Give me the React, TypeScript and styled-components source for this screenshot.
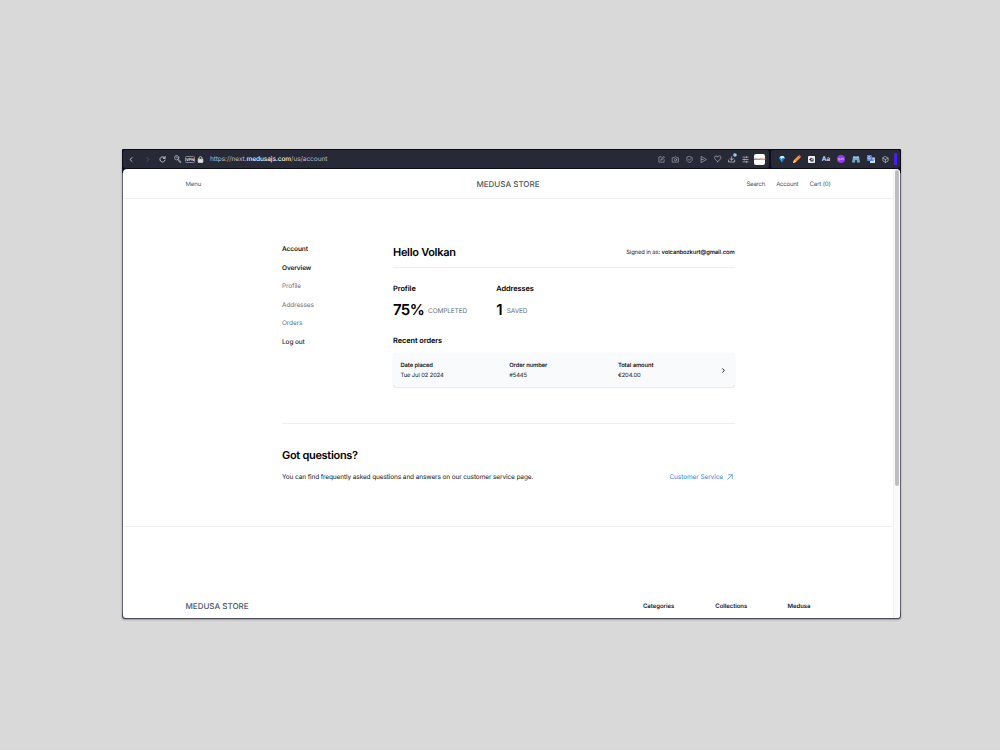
import React from 'react';
import styled, { createGlobalStyle } from 'styled-components';

const Global = createGlobalStyle`
  * { box-sizing: border-box; }
  body { margin: 0; background: #d9d9d9; font-family: Inter, "Liberation Sans", sans-serif; text-rendering: geometricPrecision; }
`;

const Stage = styled.main`
  width: 1000px;
  height: 750px;
  padding: 149px 0 0 122px;
  overflow: hidden;
  background: #d9d9d9;
`;

const Browser = styled.div`
  width: 779px;
  height: 470px;
  padding: 1px 1px 1.5px;
  display: flex;
  flex-direction: column;
  background: linear-gradient(#0c0c1c 0 24px, #62636e 24px 460px, #4a4b57 466px);
  border-radius: 1px 1px 3px 3px;
  box-shadow: 0 1px 2px rgba(0, 0, 0, 0.3);
`;

const Toolbar = styled.div`
  height: 19px;
  flex: none;
  padding-bottom: 1px;
  display: flex;
  gap: 2px;
  background: #0c0c1c;
`;

const BarSegment = styled.div<{ $width: number; $pad: number }>`
  width: ${(p) => p.$width}px;
  height: 18px;
  padding-left: ${(p) => p.$pad}px;
  display: flex;
  align-items: center;
  background: #272936;
  border-radius: 2px;
`;

const Slot = styled.span<{ $w: number }>`
  width: ${(p) => p.$w}px;
  flex: none;
  display: flex;
  align-items: center;
  justify-content: center;
  svg { display: block; overflow: visible; }
`;

const VpnTag = styled.span`
  width: 10px;
  flex: none;
  height: 7px;
  border: 1px solid #858793;
  border-radius: 1.5px;
  color: #e2e3ea;
  font-size: 3.8px;
  font-weight: 700;
  line-height: 5px;
  text-align: center;
`;

const Url = styled.span`
  width: 448px;
  flex: none;
  padding-left: 1px;
  color: #b9bbc6;
  font-size: 6.5px;
  line-height: 10px;
  letter-spacing: -0.05px;
  white-space: nowrap;
  b { font-weight: 500; color: #f4f4f8; }
`;

const SiteBadge = styled.span`
  width: 11px;
  height: 11px;
  background: #fff;
  border-radius: 2px;
  color: #555;
  font-size: 2.8px;
  font-weight: 800;
  line-height: 11px;
  text-align: center;
  i { color: #e3403f; font-style: normal; }
`;

const AaLabel = styled.span`
  color: #e4e5ea;
  font-size: 6.4px;
  font-weight: 600;
`;

const AccentBar = styled.span`
  width: 3px;
  height: 12px;
  margin-left: 2px;
  background: #4a1fe0;
`;

const Viewport = styled.div`
  flex: 1;
  min-height: 0;
  display: flex;
  overflow: hidden;
  background: #fff;
  border-radius: 4px 4px 3px 3px;
`;

const Page = styled.div`
  width: 770px;
  flex: none;
`;

const Scrollbar = styled.div`
  flex: 1;
  padding: 1px 0 0 1.3px;
  background: #fafafa;
  border-left: 1px solid #f0f0f0;
`;

const Thumb = styled.div`
  width: 4px;
  height: 316px;
  background: #bdbdbf;
  border-radius: 2px;
`;

const Text = styled.span<{ $size: number; $weight?: number; $color?: string; $track?: number; $line?: number }>`
  display: block;
  font-size: ${(p) => p.$size}px;
  font-weight: ${(p) => p.$weight ?? 400};
  color: ${(p) => p.$color ?? '#111827'};
  letter-spacing: ${(p) => p.$track ?? 0}px;
  line-height: ${(p) => p.$line ?? 10}px;
  white-space: nowrap;
`;

const Strong = styled.b`
  font-weight: 600;
`;

const SiteNav = styled.nav`
  height: 30px;
  padding: 1px 62.5px 0;
  display: grid;
  grid-template-columns: 1fr auto 1fr;
  align-items: center;
  border-bottom: 1px solid #efeff1;
`;

const NavLinks = styled.div`
  display: flex;
  justify-content: flex-end;
  gap: 11px;
`;

const Account = styled.section`
  width: 453px;
  margin-left: 159px;
  padding-top: 45px;
`;

const Columns = styled.div`
  height: 179px;
  display: flex;
`;

const Sidebar = styled.aside`
  width: 111px;
  flex: none;
  display: flex;
  flex-direction: column;
  gap: 8.5px;
`;

const Overview = styled.div`
  width: 341.5px;
`;

const Greeting = styled.header`
  height: 24px;
  padding-bottom: 7px;
  display: flex;
  align-items: center;
  justify-content: space-between;
  border-bottom: 1px solid #eeeff1;
`;

const Stats = styled.div`
  padding-top: 16px;
  display: flex;
`;

const Stat = styled.div`
  width: 103.3px;
`;

const Figure = styled.div`
  height: 22px;
  margin-top: 5px;
  display: flex;
  gap: 4px;
`;

const FigureNote = styled.div`
  padding-top: 7px;
`;

const OrdersTitle = styled.div`
  padding-top: 15px;
`;

const OrderCard = styled.div`
  height: 34px;
  margin-top: 7px;
  padding: 8px 8px 0 7.5px;
  display: grid;
  grid-template-columns: 108.7px 108.7px 1fr auto;
  align-items: start;
  background: #f9fafb;
  border-radius: 3px;
  box-shadow: 0 0 1px rgba(0, 0, 0, 0.12), 0 1px 1px rgba(0, 0, 0, 0.08);
`;

const Arrow = styled.div`
  padding-top: 6px;
  display: flex;
`;

const Help = styled.div`
  height: 103px;
  padding-top: 23px;
  border-top: 1px solid #efeff1;
`;

const HelpRow = styled.div`
  margin-top: 9px;
  padding-right: 2px;
  display: flex;
  justify-content: space-between;
  align-items: center;
`;

const HelpLink = styled.a`
  display: flex;
  align-items: center;
  gap: 4px;
`;

const Footer = styled.footer`
  padding: 74px 0 0 62.5px;
  display: flex;
  border-top: 1px solid #efeff1;
`;

const FooterBrand = styled.div`
  width: 457.5px;
`;

const FooterColumn = styled.div`
  width: 72.3px;
`;

const Glyph = ({ size = 7, color = '#a9abb5', width = 2.2, children }: { size?: number; color?: string; width?: number; children: React.ReactNode }) => (
  <svg width={size} height={size} viewBox="0 0 24 24" fill="none" stroke={color} strokeWidth={width} strokeLinecap="round" strokeLinejoin="round">
    {children}
  </svg>
);

const links = [
  { label: 'Overview', weight: 600, color: '#111827' },
  { label: 'Profile', weight: 400, color: '#6b7280' },
  { label: 'Addresses', weight: 400, color: '#6b7280' },
  { label: 'Orders', weight: 400, color: '#6b7280' },
  { label: 'Log out', weight: 500, color: '#1f2430' },
];

const order = [
  ['Date placed', 'Tue Jul 02 2024'],
  ['Order number', '#5445'],
  ['Total amount', '€204.00'],
];

const BrowserBar = () => (
  <Toolbar>
    <BarSegment $width={646} $pad={0}>
      <Slot $w={16}><Glyph color="#d5d6de" width={2.8}><path d="M14 5 7 12l7 7" /></Glyph></Slot>
      <Slot $w={17}><Glyph color="#5f616e" width={2.4}><path d="m10 5 7 7-7 7" /></Glyph></Slot>
      <Slot $w={12}><Glyph color="#d5d6de" width={3}><path d="M20 7a9 9 0 1 0 1 7" /><path d="M21 2v6h-6" /></Glyph></Slot>
      <Slot $w={20}>
        <Glyph size={8} color="#b4b6c0" width={2.2}>
          <circle cx="8" cy="8" r="6.5" /><path d="m13 12 8 8v2h-4v-3h-3l-2-5M6 6h3v3" />
        </Glyph>
      </Slot>
      <Slot $w={4}><VpnTag>VPN</VpnTag></Slot>
      <Slot $w={17}>
        <Glyph color="#e0e1e7" width={2.6}><path d="M7 11V7a5 5 0 0 1 10 0v4" /><rect x="4" y="11" width="16" height="11" rx="1" fill="#e0e1e7" /></Glyph>
      </Slot>
      <Url>https://next.<b>medusajs.com</b>/us/account</Url>
      <Slot $w={9}><Glyph><path d="M12 3H3v18h18v-8M10 14l2-5 8-7 2 3-8 7-4 2Z" /></Glyph></Slot>
      <Slot $w={19}><Glyph><path d="M2 6h5l2-3h6l2 3h5v15H2Z" /><circle cx="12" cy="13" r="4" /></Glyph></Slot>
      <Slot $w={9}><Glyph><path d="M12 2 21 5v7c0 6-5 9-9 10-4-1-9-4-9-10V5Z" /><path d="m8 12 3 3 5-6" /></Glyph></Slot>
      <Slot $w={19}><Glyph width={2.4}><path d="m5 2 17 10L5 22Z" /><path d="M5 12h6" /></Glyph></Slot>
      <Slot $w={9}><Glyph size={7.5} width={2.4}><path d="M12 21C7 17 2 13 2 8c0-6 8-7 10-1 2-6 10-5 10 1 0 5-5 9-10 13Z" /></Glyph></Slot>
      <Slot $w={19}>
        <Glyph size={8} color="#cdced5"><path d="M11 5v10m-5-4 5 4 5-4M2 15v6h18v-6" /><circle cx="21" cy="0" r="5.5" fill="#8fc9f5" stroke="none" /></Glyph>
      </Slot>
      <Slot $w={9}><Glyph color="#c2c3cc" width={2.4}><path d="M3 4h18M3 12h18M3 20h18M15 2v4M8 10v4M15 18v4" /></Glyph></Slot>
      <Slot $w={18}><SiteBadge>abou<i>tme</i></SiteBadge></Slot>
    </BarSegment>
    <BarSegment $width={129} $pad={3}>
      <Slot $w={15}>
        <svg width="6" height="7" viewBox="0 0 12 14"><path d="M0 4 3 0h6l3 4-6 9Z" fill="#3c9deb" /><path d="m2 3 2-3h5l2 4-5 2Z" fill="#d9f1ff" /><path d="m6 5 5-1-5 9Z" fill="#176bc1" /></svg>
      </Slot>
      <Slot $w={15}>
        <svg width="8" height="8" viewBox="0 0 16 16"><path d="m0 16 2-6L11 1l4 4-9 9Z" fill="#f6962c" /><path d="m11 1 2-1 3 3-1 2Z" fill="#ef635d" /><path d="m0 16 2-6 4 4Z" fill="#ffd7a0" /></svg>
      </Slot>
      <Slot $w={15}>
        <svg width="7" height="7" viewBox="0 0 14 14"><rect width="14" height="14" rx="2" fill="#f0f0f2" /><path d="M2 7 7 3v2h4v6H5V9Z" fill="#272936" /><circle cx="8" cy="7.5" r="1.5" fill="#fff" /></svg>
      </Slot>
      <Slot $w={14}><AaLabel>Aa</AaLabel></Slot>
      <Slot $w={15}>
        <svg width="8" height="8" viewBox="0 0 16 16"><circle cx="8" cy="8" r="8" fill="#8f3de1" /><path d="M3 7h3v3H3Zm5 3V7h2v3m0-3h3v3" fill="none" stroke="#dcb6ff" strokeWidth="1.2" /></svg>
      </Slot>
      <Slot $w={15}>
        <svg width="8" height="7" viewBox="0 0 16 14"><path d="M2 1h12l2 12h-6V10a2 2 0 0 0-4 0v3H0Z" fill="#7aa9cd" /><path d="M3 1h4v3H2Zm6 0h4l1 3H9Z" fill="#a8d0e8" /></svg>
      </Slot>
      <Slot $w={15}>
        <svg width="8" height="8" viewBox="0 0 16 16"><rect x="6" y="5" width="10" height="11" rx="1" fill="#d7dbe3" /><path d="M0 0h9l3 12H0Z" fill="#4c82e8" /><path d="M7 5.5A2.6 2.6 0 1 1 6 3.4M5 6h2" fill="none" stroke="#eff3ff" strokeWidth="1.2" /><path d="M11 8h4m-1 0-2 5" fill="none" stroke="#6d7c99" strokeWidth="1.2" /></svg>
      </Slot>
      <Slot $w={14}><Glyph color="#c6c7cf"><path d="m12 2 9 5v10l-9 5-9-5V7ZM3 7l9 5 9-5M12 12v10" /></Glyph></Slot>
      <AccentBar />
    </BarSegment>
  </Toolbar>
);

export default function App() {
  return (
    <Stage>
      <Global />
      <Browser>
        <BrowserBar />
        <Viewport>
          <Page>
            <SiteNav>
              <Text $size={6} $color="#4b5563" $track={-0.1} $line={11}>Menu</Text>
              <Text $size={8} $color="#4b5563" $weight={500}>MEDUSA STORE</Text>
              <NavLinks>
                <Text $size={6} $color="#4b5563" $track={-0.2} $line={11}>Search</Text>
                <Text $size={6} $color="#4b5563" $track={-0.2} $line={11}>Account</Text>
                <Text $size={6} $color="#4b5563" $track={-0.1} $line={11}>Cart (0)</Text>
              </NavLinks>
            </SiteNav>
            <Account>
              <Columns>
                <Sidebar>
                  <Text $size={6.5} $weight={600} $track={-0.07}>Account</Text>
                  {links.map((l) => (
                    <Text key={l.label} $size={6.5} $weight={l.weight} $color={l.color} $track={-0.1}>{l.label}</Text>
                  ))}
                </Sidebar>
                <Overview>
                  <Greeting>
                    <Text $size={11} $weight={600} $color="#000" $line={14} $track={-0.3}>Hello Volkan</Text>
                    <Text $size={5.8} $track={-0.1} $line={11}>Signed in as: <Strong>volcanbozkurt@gmail.com</Strong></Text>
                  </Greeting>
                  <Stats>
                    <Stat>
                      <Text $size={7.4} $weight={600} $color="#000" $track={-0.07}>Profile</Text>
                      <Figure>
                        <Text $size={15} $weight={600} $color="#000" $line={22} $track={-0.65}>75%</Text>
                        <FigureNote><Text $size={6.5} $color="#6b7280" $track={-0.13}>COMPLETED</Text></FigureNote>
                      </Figure>
                    </Stat>
                    <Stat>
                      <Text $size={7.4} $weight={600} $color="#000" $track={-0.08}>Addresses</Text>
                      <Figure>
                        <Text $size={15} $weight={600} $color="#000" $line={22}>1</Text>
                        <FigureNote><Text $size={6.5} $color="#6b7280" $track={-0.1}>SAVED</Text></FigureNote>
                      </Figure>
                    </Stat>
                  </Stats>
                  <OrdersTitle><Text $size={7.4} $weight={600} $color="#000" $track={-0.07}>Recent orders</Text></OrdersTitle>
                  <OrderCard>
                    {order.map(([title, value]) => (
                      <div key={title}>
                        <Text $size={5.8} $weight={600} $line={10} $track={-0.08}>{title}</Text>
                        <Text $size={5.8} $line={9.3} $track={-0.1}>{value}</Text>
                      </div>
                    ))}
                    <Arrow><Glyph color="#111827" width={3.4}><path d="m9 6 6 6-6 6" /></Glyph></Arrow>
                  </OrderCard>
                </Overview>
              </Columns>
              <Help>
                <Text $size={11} $weight={600} $color="#000" $line={16} $track={-0.3}>Got questions?</Text>
                <HelpRow>
                  <Text $size={6.5} $track={-0.11}>You can find frequently asked questions and answers on our customer service page.</Text>
                  <HelpLink>
                    <Text $size={6.5} $color="#3b82f6" $track={-0.09}>Customer Service</Text>
                    <Glyph size={6} color="#3b82f6" width={2.8}><path d="M3 21 21 3M6 3h15v15" /></Glyph>
                  </HelpLink>
                </HelpRow>
              </Help>
            </Account>
            <Footer>
              <FooterBrand><Text $size={8} $weight={500} $color="#4b5563">MEDUSA STORE</Text></FooterBrand>
              <FooterColumn><Text $size={6} $weight={600} $track={-0.06} $line={11}>Categories</Text></FooterColumn>
              <FooterColumn><Text $size={6} $weight={600} $track={-0.06} $line={11}>Collections</Text></FooterColumn>
              <FooterColumn><Text $size={6} $weight={600} $track={-0.06} $line={11}>Medusa</Text></FooterColumn>
            </Footer>
          </Page>
          <Scrollbar><Thumb /></Scrollbar>
        </Viewport>
      </Browser>
    </Stage>
  );
}
